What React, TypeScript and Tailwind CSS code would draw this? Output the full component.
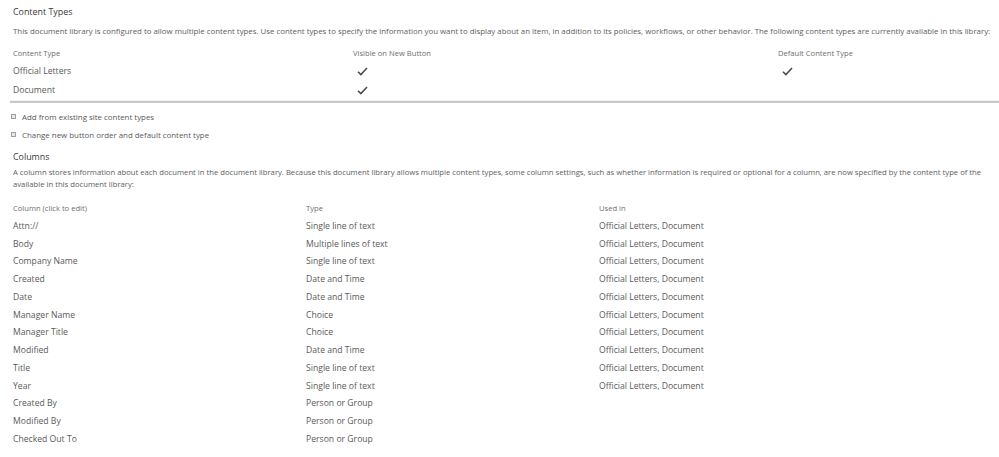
import React from "react";

const Check = () => (
  <svg width="11" height="9" viewBox="0 0 12 10" className="block">
    <path d="M1 5.2 L4.2 8.4 L11 1.2" fill="none" stroke="#4a4a4a" strokeWidth="1.7" />
  </svg>
);

const Bullet = () => (
  <span className="inline-block w-[5px] h-[5px] border border-[#a0a0a0] bg-[#e8e8e8] mr-[6px]" />
);

const rows: [string, string, string][] = [
  ["Attn://", "Single line of text", "Official Letters, Document"],
  ["Body", "Multiple lines of text", "Official Letters, Document"],
  ["Company Name", "Single line of text", "Official Letters, Document"],
  ["Created", "Date and Time", "Official Letters, Document"],
  ["Date", "Date and Time", "Official Letters, Document"],
  ["Manager Name", "Choice", "Official Letters, Document"],
  ["Manager Title", "Choice", "Official Letters, Document"],
  ["Modified", "Date and Time", "Official Letters, Document"],
  ["Title", "Single line of text", "Official Letters, Document"],
  ["Year", "Single line of text", "Official Letters, Document"],
  ["Created By", "Person or Group", ""],
  ["Modified By", "Person or Group", ""],
  ["Checked Out To", "Person or Group", ""],
];

export default function App() {
  return (
    <div
      className="w-[999px] h-[457px] bg-white overflow-hidden text-[#5a5a5a]"
      style={{ fontFamily: '"Open Sans", "Noto Sans", sans-serif' }}
    >
      <div className="pl-[13px] pt-[5px]">
        <div className="text-[8.9px] leading-[14px] text-[#3a3a3a]">Content Types</div>
        <div className="mt-[6px] text-[7.85px] leading-[12px] whitespace-nowrap text-[#5e5e5e]">
          This document library is configured to allow multiple content types. Use content types to specify the information you want to display about an item, in addition to its policies, workflows, or other behavior. The following content types are currently available in this library:
        </div>
        <div className="mt-[10px] flex text-[7.6px] leading-[12px] text-[#6e6e6e]">
          <div className="w-[340px]">Content Type</div>
          <div className="w-[425px]">Visible on New Button</div>
          <div>Default Content Type</div>
        </div>
        <div className="mt-[5px] flex items-center h-[15px] text-[8.65px] text-[#5a5a5a]">
          <div className="w-[340px]">Official Letters</div>
          <div className="w-[425px] pl-[4px]"><Check /></div>
          <div className="pl-[4px]"><Check /></div>
        </div>
        <div className="mt-[3.5px] flex items-center h-[15px] text-[8.65px] text-[#5a5a5a]">
          <div className="w-[340px]">Document</div>
          <div className="w-[425px] pl-[4px]"><Check /></div>
        </div>
      </div>
      <div className="mt-[2px] ml-[10px] border-t border-[#f0f0f0]" />
      <div className="ml-[10px] border-t-2 border-[#c8c8c8]" />
      <div className="pl-[11px] pt-[5px] text-[7.9px] leading-[18px] text-[#5a5a5a]">
        <div className="flex items-center"><Bullet />Add from existing site content types</div>
        <div className="flex items-center"><Bullet />Change new button order and default content type</div>
      </div>
      <div className="pl-[13px]">
        <div className="mt-[6px] text-[8.9px] leading-[14px] text-[#3a3a3a]">Columns</div>
        <div className="mt-[2px] text-[7.7px] leading-[12.5px] whitespace-nowrap text-[#5e5e5e]">
          A column stores information about each document in the document library. Because this document library allows multiple content types, some column settings, such as whether information is required or optional for a column, are now specified by the content type of the
          <br />
          available in this document library:
        </div>
        <div className="mt-[11px] flex text-[7.6px] leading-[12px] text-[#6e6e6e]">
          <div className="w-[293px]">Column (click to edit)</div>
          <div className="w-[293px]">Type</div>
          <div>Used in</div>
        </div>
        <div className="mt-[4px]">
          {rows.map((r, i) => (
            <div key={i} className="flex h-[17.75px] items-center text-[8.65px] text-[#5a5a5a]">
              <div className="w-[293px]">{r[0]}</div>
              <div className="w-[293px]">{r[1]}</div>
              <div>{r[2]}</div>
            </div>
          ))}
        </div>
      </div>
    </div>
  );
}
